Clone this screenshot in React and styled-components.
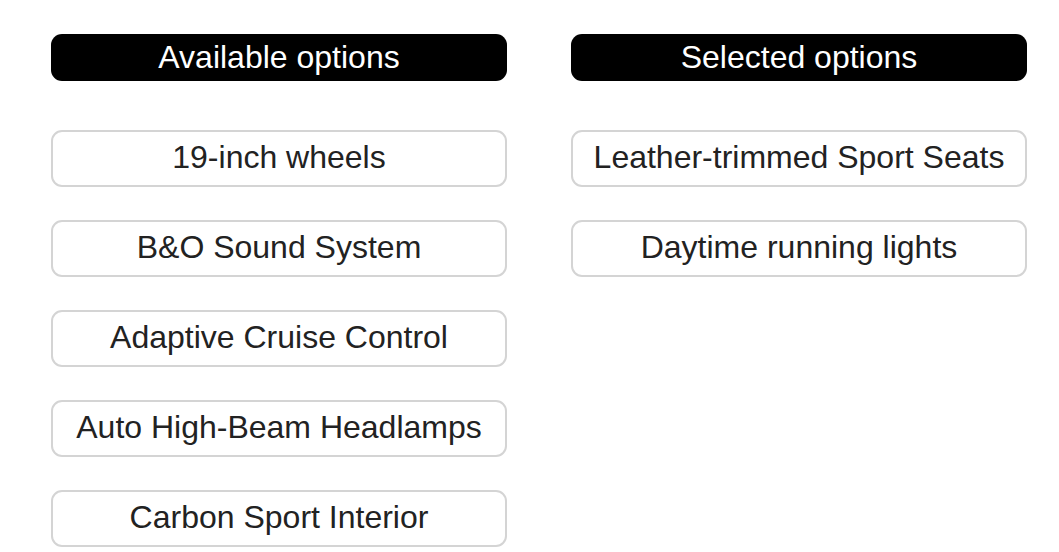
import React from "react";
import styled, { createGlobalStyle } from "styled-components";

const GlobalStyle = createGlobalStyle`
  body {
    margin: 0;
    background: #fff;
    font-family: "Liberation Sans", Arial, sans-serif;
  }
`;

const Page = styled.div`
  display: flex;
  gap: 64px;
  padding: 34px 0 0 51px;
`;

const Column = styled.div`
  width: 456px;
  display: flex;
  flex-direction: column;
`;

const Header = styled.div`
  box-sizing: border-box;
  height: 47px;
  padding-bottom: 2px;
  border-radius: 11px;
  background: #000;
  color: #fff;
  font-size: 32px;
  line-height: 1;
  display: flex;
  align-items: center;
  justify-content: center;
  margin-bottom: 49px;
`;

const List = styled.div`
  display: flex;
  flex-direction: column;
  gap: 33px;
`;

const Option = styled.div`
  box-sizing: border-box;
  height: 57px;
  padding-bottom: 3px;
  border: 2px solid #d4d4d4;
  border-radius: 11px;
  background: #fff;
  color: #222;
  font-size: 32px;
  line-height: 1;
  display: flex;
  align-items: center;
  justify-content: center;
`;

const available = [
  "19-inch wheels",
  "B&O Sound System",
  "Adaptive Cruise Control",
  "Auto High-Beam Headlamps",
  "Carbon Sport Interior",
];

const selected = ["Leather-trimmed Sport Seats", "Daytime running lights"];

const OptionColumn = ({ title, items }) => (
  <Column>
    <Header>{title}</Header>
    <List>
      {items.map(item => (
        <Option key={item}>{item}</Option>
      ))}
    </List>
  </Column>
);

const App = () => (
  <>
    <GlobalStyle />
    <Page>
      <OptionColumn title="Available options" items={available} />
      <OptionColumn title="Selected options" items={selected} />
    </Page>
  </>
);

export default App;
